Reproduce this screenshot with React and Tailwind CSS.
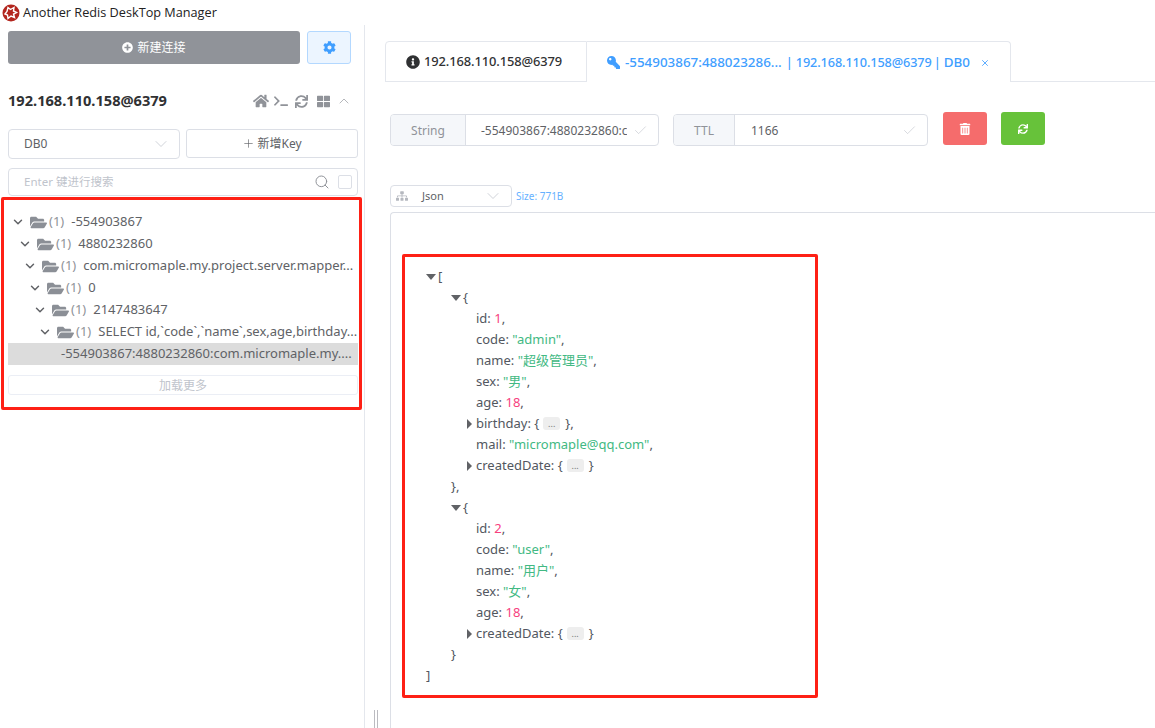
import React from "react";
import { FaHome, FaTerminal, FaSync, FaThLarge, FaFolderOpen, FaKey, FaInfoCircle, FaTrashAlt, FaSitemap, FaCog, FaPlusCircle } from "react-icons/fa";
import { ChevronDown, ChevronUp, Check, Plus, Search, X } from "lucide-react";

const tree = [
  { pad: "pl-[3px]", label: "-554903867" },
  { pad: "pl-[10px]", label: "4880232860" },
  { pad: "pl-[15px]", label: "com.micromaple.my.project.server.mapper..." },
  { pad: "pl-[20px]", label: "0" },
  { pad: "pl-[25px]", label: "2147483647" },
  { pad: "pl-[30px]", label: "SELECT id,`code`,`name`,sex,age,birthday..." },
];

function TreeRow({ pad, label }) {
  return (
    <div className={`h-[22px] flex items-center whitespace-nowrap text-[#606266] ${pad}`}>
      <ChevronDown size={14} strokeWidth={2.5} className="text-[#606266] shrink-0" />
      <FaFolderOpen size={17} className="ml-[5px] text-[#8b8f96] shrink-0" />
      <span className="text-[#909399] ml-[2px]">(1)</span>
      <span className="ml-[7px]">{label}</span>
    </div>
  );
}

const Str = ({ children }) => <span className="text-[#42b983]">{children}</span>;
const Num = ({ children }) => <span className="text-[#f7417e]">{children}</span>;

function ArrowDown() {
  return <span className="w-0 h-0 mr-[2px] border-x-[5px] border-x-transparent border-t-[6px] border-t-[#606266]" />;
}
function ArrowRight() {
  return <span className="w-0 h-0 mr-1 border-y-[5px] border-y-transparent border-l-[5px] border-l-[#606266]" />;
}
function Ellipsis() {
  return <span className="inline-flex justify-center items-center w-[17px] h-[13px] ml-[4px] mr-[5px] rounded-[3px] bg-[#eeeeee] text-[9px] leading-none text-[#777]">...</span>;
}

function Line({ level, children }) {
  const pad = { 0: "pl-[35px]", 1: "pl-[60px]", 2: "pl-[85px]" }[level];
  return <div className={`h-[21px] flex items-center whitespace-pre text-[#525760] ${pad}`}>{children}</div>;
}
function Open({ level, children }) {
  const pad = { 0: "pl-[35px]", 1: "pl-[60px]" }[level];
  return <div className={`h-[21px] flex items-center whitespace-pre text-[#525760] ${pad}`}><ArrowDown />{children}</div>;
}
function Fold({ children, trail }) {
  return (
    <div className="h-[21px] flex items-center whitespace-pre text-[#525760] pl-[76px]">
      <ArrowRight />{children}: {"{"}<Ellipsis />{trail}
    </div>
  );
}

function Logo() {
  return (
    <svg width="18" height="18" viewBox="0 0 18 18" className="shrink-0">
      <circle cx="9" cy="9" r="8.5" fill="#b3261e" />
      <path d="M6 3.5l2.5 2 3.5-2-.5 3.5 3 1.500-3 1.500 1 3.500-3.500-1.500-3 2.500-.5-3.500-2.500-1 2-2.500z" fill="none" stroke="#fff" strokeWidth="1.400" />
    </svg>
  );
}

export default function App() {
  return (
    <div className="relative w-[1155px] h-[728px] overflow-hidden bg-white flex flex-col text-[13px] font-['Noto_Sans','Noto_Sans_CJK_SC',sans-serif]">
      <header className="h-[25px] shrink-0 flex items-center pl-[2px] gap-[3px] text-[12.7px] text-[#222]">
        <Logo />
        <span className="font-['Open_Sans','Noto_Sans_CJK_SC',sans-serif]">Another Redis DeskTop Manager</span>
      </header>

      <div className="flex flex-1 min-h-0">
        <aside className="w-[365px] shrink-0 border-r border-[#e4e7ed] pl-2 pr-[6px] pt-[6px]">
          <div className="flex gap-[7px]">
            <div className="w-[292px] h-[33px] rounded-[3px] bg-[#909399] text-white flex items-center justify-center gap-1 text-[12px]">
              <FaPlusCircle size={11} />新建连接
            </div>
            <div className="w-[44px] h-[33px] rounded-[3px] bg-[#ecf5ff] border border-[#b3d8ff] text-[#409eff] flex items-center justify-center">
              <FaCog size={13} />
            </div>
          </div>

          <div className="mt-[25px] h-[24px] flex items-center justify-between pr-[6px]">
            <span className="font-bold text-[14.6px] text-[#303133]">192.168.110.158@6379</span>
            <div className="flex items-center text-[#909399]">
              <FaHome size={16} />
              <FaTerminal size={14} className="ml-[5px]" />
              <FaSync size={13} className="ml-[7px]" />
              <FaThLarge size={13} className="ml-[9px]" />
              <ChevronUp size={16} strokeWidth={1} className="ml-[6px]" />
            </div>
          </div>

          <div className="mt-[16px] flex gap-[6px] text-[12px]">
            <div className="w-[172px] h-[30px] rounded border border-[#dcdfe6] flex items-center justify-between pl-[15px] pr-[8px] text-[#606266]">
              DB0<ChevronDown size={20} strokeWidth={0.9} className="text-[#c0c4cc]" />
            </div>
            <div className="w-[172px] h-[29px] rounded-[3px] border border-[#dcdfe6] flex items-center justify-center gap-[2px] text-[#606266]">
              <Plus size={13} strokeWidth={1.200} />新增Key
            </div>
          </div>

          <div className="mt-[9px] h-[28px] w-[350px] rounded border border-[#dcdfe6] flex items-center pl-[15px] pr-[5px] text-[11.5px] text-[#c0c4cc]">
            <span className="flex-1">Enter 键进行搜索</span>
            <Search size={16} strokeWidth={1.500} className="text-[#909399]" />
            <span className="ml-[8px] w-[14px] h-[14px] rounded-[2px] border border-[#dcdfe6]" />
          </div>

          <div className="mt-[15px] w-[350px]">
            {tree.map((r) => <TreeRow key={r.label} {...r} />)}
            <div className="h-[22px] bg-[#dcdcdc] flex items-center pl-[53px] whitespace-nowrap text-[#606266]">
              -554903867:4880232860:com.micromaple.my....
            </div>
            <div className="mt-[10px] h-[20px] pt-[2px] rounded-[3px] border border-[#ebeef5] flex items-center justify-center text-[12px] text-[#c0c4cc]">
              加载更多
            </div>
          </div>
        </aside>

        <div className="w-[9px] shrink-0 relative">
          <span className="absolute left-[9px] bottom-0 h-[18px] w-[4px] border-x border-[#bbbbc0]" />
        </div>

        <main className="flex-1 min-w-0 pl-[11px] pt-[16px]">
          <div className="h-[41px] flex border-b border-[#e4e7ed] text-[12.9px] font-medium tracking-[-0.1px]">
            <div className="w-[202px] h-[41px] pt-px shrink-0 border border-[#e4e7ed] rounded-tl flex items-center pl-[20px] gap-[4px] text-[#303133] whitespace-nowrap">
              <FaInfoCircle size={14} className="shrink-0" />192.168.110.158@6379
            </div>
            <div className="w-[424px] h-[41px] pt-px shrink-0 bg-white border-t border-r border-[#e4e7ed] rounded-tr flex items-center pl-[20px] text-[#409eff] whitespace-nowrap">
              <FaKey size={13} className="-scale-x-100 shrink-0" />
              <span className="ml-[5px] text-[13.4px] tracking-normal">-554903867:488023286...</span>
              <span className="ml-[4px]">|</span>
              <span className="ml-[3px] text-[12.7px]">192.168.110.158@6379</span>
              <span className="ml-[2px]">|</span>
              <span className="ml-[3px] text-[13.4px] tracking-normal">DB0</span>
              <X size={10} className="ml-[10px] shrink-0" />
            </div>
          </div>

          <div className="mt-[30px] pl-[5px] flex items-start text-[12px] text-[#606266]">
            <div className="mt-[2px] w-[269px] h-[32px] flex rounded border border-[#dcdfe6] overflow-hidden">
              <div className="w-[75px] pt-px bg-[#f5f7fa] border-r border-[#dcdfe6] text-[#909399] flex items-center justify-center">String</div>
              <div className="flex-1 min-w-0 flex items-center pl-[15px] pr-[10px] pt-px">
                <span className="flex-1 overflow-hidden whitespace-nowrap">-554903867:4880232860:com</span>
                <Check size={15} strokeWidth={1} className="ml-[6px] shrink-0 text-[#c0c4cc]" />
              </div>
            </div>
            <div className="mt-[2px] ml-[14px] w-[255px] h-[32px] flex rounded border border-[#dcdfe6] overflow-hidden">
              <div className="w-[61px] pt-px bg-[#f5f7fa] border-r border-[#dcdfe6] text-[#909399] flex items-center justify-center">TTL</div>
              <div className="flex-1 flex items-center justify-between pl-[16px] pr-[10px] pt-px">
                1166<Check size={15} strokeWidth={1} className="text-[#c0c4cc]" />
              </div>
            </div>
            <div className="ml-[15px] w-[44px] h-[33px] rounded-[3px] bg-[#f56c6c] text-white flex items-center justify-center">
              <FaTrashAlt size={12} />
            </div>
            <div className="ml-[14px] w-[44px] h-[33px] rounded-[3px] bg-[#67c23a] text-white flex items-center justify-center">
              <FaSync size={10} />
            </div>
          </div>

          <div className="mt-[39px] pl-[5px] flex items-center">
            <div className="w-[122px] h-[22px] rounded border border-[#dcdfe6] flex items-center pl-[5px] pr-[8px] text-[11px] text-[#606266]">
              <FaSitemap size={12} className="text-[#b5b8bf]" />
              <span className="ml-[14px] flex-1">Json</span>
              <ChevronDown size={20} strokeWidth={0.9} className="text-[#c0c4cc]" />
            </div>
            <span className="ml-[4px] text-[10px] text-[#66b1ff]">Size: 771B</span>
          </div>

          <div className="mt-[5px] ml-[5px] h-[600px] border-t border-l border-[#dcdfe6] rounded-tl pt-[53px] text-[13px]">
            <Open level={0}>[</Open>
            <Open level={1}>{"{"}</Open>
            <Line level={2}>id: <Num>1</Num>,</Line>
            <Line level={2}>code: <Str>"admin"</Str>,</Line>
            <Line level={2}>name: <Str>"超级管理员"</Str>,</Line>
            <Line level={2}>sex: <Str>"男"</Str>,</Line>
            <Line level={2}>age: <Num>18</Num>,</Line>
            <Fold trail="},">birthday</Fold>
            <Line level={2}>mail: <Str>"micromaple@qq.com"</Str>,</Line>
            <Fold trail="}">createdDate</Fold>
            <Line level={1}>{"},"}</Line>
            <Open level={1}>{"{"}</Open>
            <Line level={2}>id: <Num>2</Num>,</Line>
            <Line level={2}>code: <Str>"user"</Str>,</Line>
            <Line level={2}>name: <Str>"用户"</Str>,</Line>
            <Line level={2}>sex: <Str>"女"</Str>,</Line>
            <Line level={2}>age: <Num>18</Num>,</Line>
            <Fold trail="}">createdDate</Fold>
            <Line level={1}>{"}"}</Line>
            <Line level={0}>]</Line>
          </div>
        </main>
      </div>

      <div className="absolute left-[1px] top-[197px] w-[361px] h-[213px] border-[3px] border-[#fe2015] rounded-[2px] pointer-events-none" />
      <div className="absolute left-[402px] top-[254px] w-[416px] h-[444px] border-[3px] border-[#fe2015] rounded-[2px] pointer-events-none" />
    </div>
  );
}
